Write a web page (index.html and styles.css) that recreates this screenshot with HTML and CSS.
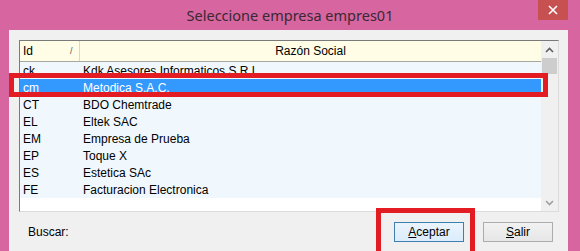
FILE: index.html
```html
<!DOCTYPE html>
<html>
<head>
<meta charset="utf-8">
<link rel="stylesheet" href="styles.css">
</head>
<body>
<div class="window">
  <div class="titlebar">
    <span class="title">Seleccione empresa empres01</span>
    <div class="close">
      <svg width="10" height="10" viewBox="0 0 10 10"><path d="M1 1 L9 9 M9 1 L1 9" stroke="#fff" stroke-width="1.6"/></svg>
    </div>
  </div>
  <div class="client">
    <div class="listview">
      <div class="grid">
        <div class="header">
          <div class="hcell hid">Id<span class="sort">/</span></div>
          <div class="hcell hname">Razón Social</div>
        </div>
        <div class="rows">
          <div class="row"><span class="cid">ck</span><span class="cname">Kdk Asesores Informaticos S.R.L</span></div>
          <div class="row sel"><span class="cid">cm</span><span class="cname">Metodica S.A.C.</span></div>
          <div class="row"><span class="cid">CT</span><span class="cname">BDO Chemtrade</span></div>
          <div class="row"><span class="cid">EL</span><span class="cname">Eltek SAC</span></div>
          <div class="row"><span class="cid">EM</span><span class="cname">Empresa de Prueba</span></div>
          <div class="row"><span class="cid">EP</span><span class="cname">Toque X</span></div>
          <div class="row"><span class="cid">ES</span><span class="cname">Estetica SAc</span></div>
          <div class="row"><span class="cid">FE</span><span class="cname">Facturacion Electronica</span></div>
        </div>
      </div>
      <div class="scrollbar">
        <div class="arrow up"><svg width="9" height="6" viewBox="0 0 9 6"><path d="M1 5 L4.5 1.5 L8 5" fill="none" stroke="#606060" stroke-width="1.6"/></svg></div>
        <div class="thumb"></div>
        <div class="track"></div>
        <div class="arrow down"><svg width="9" height="6" viewBox="0 0 9 6"><path d="M1 1 L4.5 4.5 L8 1" fill="none" stroke="#a0a0a0" stroke-width="1.6"/></svg></div>
      </div>
    </div>
    <div class="footer">
      <span class="buscar">Buscar:</span>
      <div class="buttons">
        <button class="btn default"><u>A</u>ceptar</button>
        <button class="btn"><u>S</u>alir</button>
      </div>
    </div>
  </div>
  <div class="mark mark-row"></div>
  <div class="mark mark-btn"></div>
</div>
</body>
</html>
```

FILE: styles.css
```css
html, body {
  margin: 0;
  padding: 0;
}
body {
  width: 580px;
  height: 251px;
  overflow: hidden;
  background: #d665a0;
}
.window {
  position: relative;
  width: 580px;
  height: 251px;
  overflow: hidden;
  display: flex;
  flex-direction: column;
}
.titlebar {
  height: 30px;
  display: flex;
  align-items: center;
  justify-content: center;
  position: relative;
}
.title {
  font-family: "Noto Sans", "Open Sans", sans-serif;
  font-size: 14.5px;
  color: #3a2832;
  margin-top: -1px;
}
.close {
  position: absolute;
  right: 12px;
  top: 0;
  width: 30px;
  height: 20px;
  background: #c75050;
  display: flex;
  align-items: center;
  justify-content: center;
}
.client {
  margin-left: 9px;
  width: 559px;
  flex: 1;
  background: #f0f0f0;
  padding-top: 10px;
  box-sizing: border-box;
  font-family: "Liberation Sans", Arial, sans-serif;
  font-size: 12px;
  color: #000;
}
.listview {
  margin-left: 10px;
  width: 540px;
  height: 172px;
  box-sizing: border-box;
  border-top: 1px solid #7a7a7a;
  border-left: 1px solid #7a7a7a;
  border-right: 1px solid #dcdcdc;
  border-bottom: 1px solid #dcdcdc;
  background: #fff;
  display: flex;
}
.grid {
  flex: 1;
  display: flex;
  flex-direction: column;
}
.header {
  height: 21px;
  display: flex;
  background: #fffde6;
  border-bottom: 1px solid #a8a8a0;
  box-sizing: border-box;
}
.hcell {
  display: flex;
  align-items: center;
  box-sizing: border-box;
}
.hid {
  width: 60px;
  padding-left: 3px;
  border-right: 1px solid #d8d8cc;
  position: relative;
}
.sort {
  position: absolute;
  left: 50px;
  font-size: 9px;
  color: #555;
}
.hname {
  flex: 1;
  justify-content: center;
}
.rows {
  display: flex;
  flex-direction: column;
}
.row {
  height: 17px;
  display: flex;
  align-items: center;
  background: #f0f8fe;
}
.row.sel {
  background: #3399ff;
  color: #fff;
}
.cid {
  width: 60px;
  padding-left: 3px;
  box-sizing: border-box;
}
.cname {
  padding-left: 3px;
}
.scrollbar {
  width: 17px;
  background: #f0f0f0;
  display: flex;
  flex-direction: column;
}
.arrow {
  height: 17px;
  display: flex;
  align-items: center;
  justify-content: center;
}
.thumb {
  height: 16px;
  background: #cdcdcd;
  margin: 0 1px;
}
.track {
  flex: 1;
}
.footer {
  height: 39px;
  display: flex;
  align-items: center;
  justify-content: space-between;
  padding-left: 19px;
  padding-right: 15px;
}
.buscar {
  font-size: 12px;
  margin-top: 1px;
}
.buttons {
  display: flex;
  gap: 19px;
  margin-top: 1px;
}
.btn {
  width: 70px;
  height: 20px;
  padding: 0;
  font-family: "Liberation Sans", Arial, sans-serif;
  font-size: 12px;
  color: #000;
  background: linear-gradient(#f2f2f2, #e6e6e6);
  border: 1px solid #acacac;
  border-radius: 0;
}
.btn.default {
  border-color: #3c7fb1;
  background: linear-gradient(#eaf4fc, #dcecfc);
}
.mark {
  position: absolute;
  border: 5px solid #e31b23;
  box-sizing: border-box;
}
.mark-row {
  left: 9px;
  top: 73px;
  width: 539px;
  height: 24px;
}
.mark-btn {
  left: 376px;
  top: 208px;
  width: 99px;
  height: 43px;
  border-bottom: 0;
}
```
